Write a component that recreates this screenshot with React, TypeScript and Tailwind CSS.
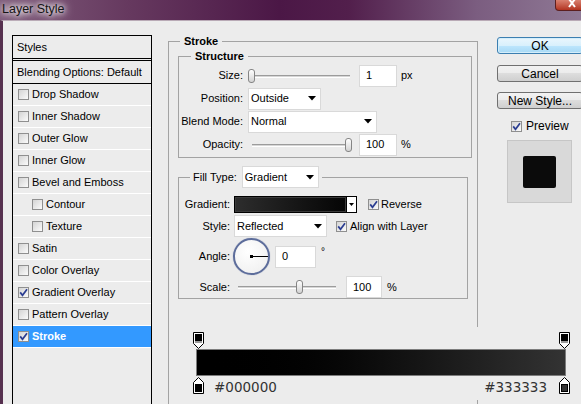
import React from "react";

const ui = "font-['Liberation_Sans',Arial,sans-serif]";

function CheckBox({ checked = false, className = "" }: { checked?: boolean; className?: string }) {
  return (
    <span
      className={`flex h-[11px] w-[11px] shrink-0 items-center justify-center border border-[#8f8f8f] bg-linear-to-br from-[#d4d4d4] to-[#fbfbfb] ${className}`}
    >
      {checked && (
        <svg width="9" height="9" viewBox="0 0 9 9">
          <path d="M1.2 4.4 3.5 7.3 8 1.2" fill="none" stroke="#2b3d91" strokeWidth="1.7" />
        </svg>
      )}
    </span>
  );
}

function Arrow() {
  return (
    <svg width="8" height="5" viewBox="0 0 8 5">
      <path d="M0 0H8L4 4.5Z" fill="#000" />
    </svg>
  );
}

function Select({ value, className = "" }: { value: string; className?: string }) {
  return (
    <div
      className={`flex h-[22px] shrink-0 items-center justify-between border border-[#d9d9d9] bg-white pl-[2px] pr-[4px] ${className}`}
    >
      <span>{value}</span>
      <Arrow />
    </div>
  );
}

function Field({ value, className = "" }: { value: string; className?: string }) {
  return (
    <div className={`flex h-[22px] shrink-0 items-center border border-[#d9d9d9] bg-white pl-[6px] ${className}`}>
      {value}
    </div>
  );
}

function Slider({ width, thumb, trackLeft }: { width: string; thumb: string; trackLeft: string }) {
  return (
    <div className={`relative h-[16px] shrink-0 ${width}`}>
      <div className={`absolute right-[2px] top-[7px] h-[3px] border-t border-b border-t-[#9c9c9c] border-b-white bg-[#d6d6d6] ${trackLeft}`} />
      <div
        className={`absolute top-[1px] h-[14px] w-[7px] rounded-[3px] border border-[#858585] bg-linear-to-b from-white to-[#d3d3d3] ${thumb}`}
      />
    </div>
  );
}

function Button({ children, primary = false, className = "" }: { children: React.ReactNode; primary?: boolean; className?: string }) {
  return (
    <div
      className={`flex h-[17px] items-center justify-center rounded-[3px] border text-[12px] text-black ${
        primary
          ? "border-[#3c7fb1] bg-[linear-gradient(#eaf6fd,#d9f0fc_50%,#bee6fd_50%,#a7d9f5)] shadow-[inset_0_0_0_1px_#d4eefb]"
          : "border-[#707070] bg-[linear-gradient(#f2f2f2,#ebebeb_50%,#dddddd_50%,#cfcfcf)]"
      } ${className}`}
    >
      {children}
    </div>
  );
}

function OpacityStop() {
  return (
    <svg width="11" height="17" viewBox="0 0 11 17" className="shrink-0">
      <path d="M0.5 0.5H10.5V11.5L5.5 16.5L0.5 11.5Z" fill="#fff" stroke="#000" />
      <rect x="2" y="2" width="7" height="7" fill="#000" />
      <rect x="2" y="9" width="7" height="2" fill="#9a9a9a" />
    </svg>
  );
}

function ColorStop({ color }: { color: string }) {
  return (
    <svg width="11" height="17" viewBox="0 0 11 17" className="shrink-0">
      <path d="M5.5 0.5L10.5 5.5V16.5H0.5V5.5Z" fill="#fff" stroke="#000" />
      <rect x="2.5" y="7.5" width="6" height="7" fill={color} stroke="#000" />
    </svg>
  );
}

const styleRows = [
  { label: "Drop Shadow" },
  { label: "Inner Shadow" },
  { label: "Outer Glow" },
  { label: "Inner Glow" },
  { label: "Bevel and Emboss" },
  { label: "Contour", sub: true },
  { label: "Texture", sub: true },
  { label: "Satin" },
  { label: "Color Overlay" },
  { label: "Gradient Overlay", on: true },
  { label: "Pattern Overlay" },
  { label: "Stroke", on: true, active: true },
];

export default function App() {
  return (
    <div className={`relative h-[404px] w-[581px] overflow-hidden bg-[#ececec] text-[11px] text-black ${ui}`}>
      {/* title bar */}
      <div className="flex h-[20px] items-start bg-[linear-gradient(90deg,#7f5c7b_0%,#66395f_22%,#4b1746_48%,#521f4c_60%,#7b5d80_82%,#8f7995_100%)]">
        <span className="pl-[2px] pt-[2px] text-[12.5px] leading-[15px] text-[#151515] [text-shadow:0_0_5px_#fff,0_0_9px_#fff,0_0_12px_#fff]">
          Layer Style
        </span>
        <div className="-mr-[8px] ml-auto flex h-[11px] w-[34px] items-end justify-center overflow-hidden rounded-b-[4px] border border-t-0 border-[#5c1f1f] bg-linear-to-b from-[#d9806f] to-[#b2321f]">
          <svg width="8" height="9" viewBox="0 0 8 9" className="mb-[1px]">
            <path d="M1 -1L7 7M7 -1L1 7" stroke="#fff" strokeWidth="2" />
          </svg>
        </div>
      </div>

      <div className="flex h-[384px] border-l-[3px] border-t border-l-[#56304f] border-t-[#b9aab6]">
        {/* styles list */}
        <div className="ml-[9px] mt-[14px] h-[400px] w-[140px] shrink-0 border border-black">
          <div className="flex h-[25px] items-center border-b-[3px] border-double border-black pl-[4px]">Styles</div>
          <div className="flex h-[23px] items-center border-b border-black pl-[4px]">Blending Options: Default</div>
          {styleRows.map((r) => (
            <div
              key={r.label}
              className={`flex h-[22px] items-center gap-[3px] border-b border-white ${r.sub ? "pl-[19px]" : "pl-[5px]"} ${
                r.active ? "bg-[#3399ff] font-bold text-white" : ""
              }`}
            >
              <CheckBox checked={r.on} />
              <span>{r.label}</span>
            </div>
          ))}
        </div>

        {/* stroke settings */}
        <fieldset className="ml-[16px] mt-[14px] h-[380px] w-[310px] shrink-0 border border-[#a3a3a3] pl-[9px] pt-[3px]">
          <legend className="ml-[2px] px-[4px] font-bold leading-[12px]">Stroke</legend>

          <fieldset className="w-[294px] border border-[#a3a3a3] pb-[1px] pt-[2px]">
            <legend className="ml-[12px] px-[4px] font-bold leading-[12px]">Structure</legend>
            <div className="flex h-[23px] items-center">
              <span className="w-[64px] text-right">Size:</span>
              <div className="ml-[5px]">
                <Slider width="w-[104px]" thumb="left-0" trackLeft="left-[2px]" />
              </div>
              <Field value="1" className="ml-[7px] w-[38px]" />
              <span className="ml-[4px]">px</span>
            </div>
            <div className="flex h-[23px] items-center">
              <span className="w-[64px] text-right">Position:</span>
              <Select value="Outside" className="ml-[5px] w-[73px]" />
            </div>
            <div className="flex h-[23px] items-center">
              <span className="w-[64px] text-right">Blend Mode:</span>
              <Select value="Normal" className="ml-[5px] w-[129px]" />
            </div>
            <div className="flex h-[23px] items-center">
              <span className="w-[64px] text-right">Opacity:</span>
              <div className="ml-[5px]">
                <Slider width="w-[104px]" thumb="left-[97px]" trackLeft="left-[4px]" />
              </div>
              <Field value="100" className="ml-[7px] w-[38px]" />
              <span className="ml-[4px] self-start pt-[3px]">%</span>
            </div>
          </fieldset>

          <fieldset className="mt-[8px] w-[290px] border border-[#a3a3a3] pt-[5px]">
            <legend className="ml-[11px] px-[3px]">
              <div className="flex items-center">
                <span>Fill Type:</span>
                <Select value="Gradient" className="ml-[5px] w-[77px]" />
              </div>
            </legend>
            <div className="flex h-[22px] items-center">
              <span className="w-[51px] text-right">Gradient:</span>
              <div className="ml-[4px] flex h-[17px] w-[123px] border border-black">
                <div className="flex-1 border border-[#3a3a3a] bg-linear-to-r from-[#2d2d2d] to-[#060606]" />
                <div className="flex w-[10px] items-center justify-center border-l border-black bg-white">
                  <svg width="5" height="3" viewBox="0 0 5 3">
                    <path d="M0 0H5L2.5 3Z" fill="#000" />
                  </svg>
                </div>
              </div>
              <CheckBox checked className="ml-[11px]" />
              <span className="ml-[2px]">Reverse</span>
            </div>
            <div className="flex h-[22px] items-center">
              <span className="w-[51px] text-right">Style:</span>
              <Select value="Reflected" className="ml-[4px] w-[93px]" />
              <CheckBox checked className="ml-[9px]" />
              <span className="ml-[3px]">Align with Layer</span>
            </div>
            <div className="flex h-[39px] items-center">
              <span className="w-[51px] text-right">Angle:</span>
              <div className="relative ml-[3px] h-[37px] w-[37px] shrink-0 rounded-full border-2 border-[#5d6d9b] bg-[radial-gradient(circle_at_40%_35%,#ffffff,#ededed)] shadow-[0_0_1px_#8b96b8]">
                <div className="absolute left-[16px] top-[16px] h-[1px] w-[17px] bg-black" />
                <div className="absolute left-[15px] top-[15px] h-[3px] w-[3px] bg-black" />
              </div>
              <Field value="0" className="ml-[5px] h-[21px] w-[41px]" />
              <span className="ml-[5px] self-start pt-[7px] text-[10px]">°</span>
            </div>
            <div className="flex h-[22px] items-center">
              <span className="w-[51px] text-right">Scale:</span>
              <div className="ml-[4px]">
                <Slider width="w-[104px]" thumb="left-[62px]" trackLeft="left-[4px]" />
              </div>
              <Field value="100" className="ml-[8px] h-[21px] w-[36px]" />
              <span className="ml-[5px]">%</span>
            </div>
          </fieldset>
        </fieldset>

        {/* buttons and preview */}
        <div className="ml-[19px] mt-[16px] flex w-[86px] shrink-0 flex-col">
          <Button primary>OK</Button>
          <Button className="mt-[11px]">Cancel</Button>
          <Button className="mt-[10px]">New Style...</Button>
          <div className="ml-[14px] mt-[11px] flex h-[12px] items-center gap-[4px] text-[12px]">
            <CheckBox checked />
            <span>Preview</span>
          </div>
          <div className="ml-[10px] mt-[8px] flex h-[63px] w-[65px] items-center justify-center border border-[#c6c6c6] bg-[#d9d9d9]">
            <div className="h-[32px] w-[33px] rounded-[2px] bg-[#0b0b0b]" />
          </div>
        </div>
      </div>

      {/* gradient editor strip */}
      <div className="absolute left-[172px] right-0 top-[327px] h-[73px] bg-[#ececec] pl-[21px] pt-[5px]">
        <div className="flex w-[377px] justify-between">
          <OpacityStop />
          <OpacityStop />
        </div>
        <div className="ml-[3px] h-[27px] w-[370px] border border-[#7c7c7c] bg-linear-to-r from-[#000000] via-[#0e0e0e] to-[#333333]" />
        <div className="mt-[1px] flex w-[377px] items-start">
          <ColorStop color="#000" />
          <span className="ml-[10px] mt-[3px] font-['DejaVu_Sans',sans-serif] text-[13.5px] leading-[15px] text-[#333]">#000000</span>
          <span className="ml-auto mr-[12px] mt-[3px] font-['DejaVu_Sans',sans-serif] text-[13.5px] leading-[15px] text-[#333]">#333333</span>
          <ColorStop color="#333" />
        </div>
      </div>
    </div>
  );
}
